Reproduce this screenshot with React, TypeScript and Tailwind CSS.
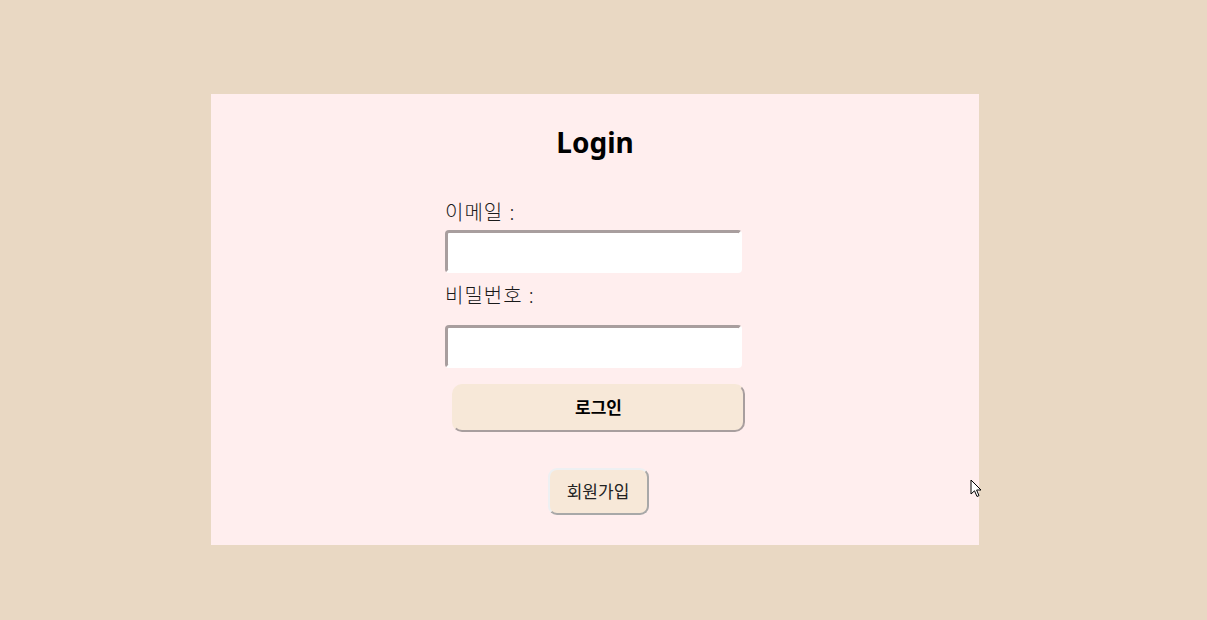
export default function App() {
  return (
    <div className="min-h-[620px] w-full bg-[#e9d8c3] pt-[94px] pl-[211px] relative" style={{ fontFamily: '"Noto Sans", "Noto Sans CJK KR", sans-serif' }}>
      <div className="w-[768px] h-[451px] bg-[#ffeeee] flex flex-col items-center">
        <h1 className="pt-[29px] text-[28px] leading-[38px] font-bold text-black">Login</h1>

        <div className="mt-[38px] w-[300px] flex flex-col">
          <label className="text-[20px] leading-[28px] tracking-[1px] text-[#1a1a1a] font-light">이메일 :</label>
          <input className="mt-[3px] w-[297px] h-[43px] bg-white rounded-[4px] border-[3px] border-t-[#a89e9e] border-l-[#a89e9e] border-r-white border-b-white outline-none" />
          <label className="mt-[9px] text-[20px] leading-[28px] tracking-[1px] text-[#1a1a1a] font-light">비밀번호 :</label>
          <input type="password" className="mt-[15px] w-[297px] h-[43px] bg-white rounded-[4px] border-[3px] border-t-[#a89e9e] border-l-[#a89e9e] border-r-white border-b-white outline-none" />
          <button className="mt-[16px] ml-[7px] w-[293px] h-[48px] bg-[#f7e8d8] rounded-[10px] border-[2px] border-t-[#f7e8d8] border-l-[#f7e8d8] border-r-[#a89e9e] border-b-[#a89e9e] text-[17px] font-semibold text-black">로그인</button>
        </div>

        <button className="mt-[36px] ml-[6px] w-[101px] h-[47px] bg-[#f7e8d8] rounded-[9px] border-[2px] border-t-[#eef0f2] border-l-[#eef0f2] border-r-[#a8a8a8] border-b-[#a8a8a8] text-[17px] text-[#222]">회원가입</button>
      </div>

      <svg className="absolute left-[970px] top-[479px]" width="13" height="20" viewBox="0 0 13 20">
        <path d="M1 1 L1 15 L4.5 11.8 L7 17.5 L9 16.6 L6.6 11 L11 11 Z" fill="white" stroke="black" strokeWidth="1" strokeLinejoin="miter" />
      </svg>
    </div>
  );
}
